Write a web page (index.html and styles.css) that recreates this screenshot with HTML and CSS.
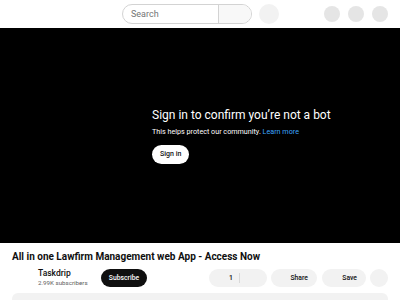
FILE: index.html
```html
<!DOCTYPE html>
<html lang="en">
<head>
  <meta charset="UTF-8">
  <meta name="viewport" content="width=device-width, initial-scale=1.0"/>
  <title>All in one Lawfirm Management web App - Access Now</title>
  <link rel="stylesheet" href="styles.css">
</head>
<body>
  <header class="topbar">
    <div class="search-group">
      <div class="search">
        <span class="search-input">Search</span>
        <span class="search-btn"></span>
      </div>
      <span class="mic"></span>
    </div>
    <div class="top-icons">
      <span class="dot"></span>
      <span class="dot"></span>
      <span class="dot"></span>
    </div>
  </header>

  <div class="player">
    <div class="bot-check">
      <h1>Sign in to confirm you’re not a bot</h1>
      <p>This helps protect our community. <a href="#">Learn more</a></p>
      <button class="signin">Sign in</button>
    </div>
  </div>

  <div class="info">
    <h2 class="title">All in one Lawfirm Management web App - Access Now</h2>
    <div class="owner-row">
      <div class="channel">
        <div class="channel-name">Taskdrip</div>
        <div class="subs">2.99K subscribers</div>
      </div>
      <button class="subscribe">Subscribe</button>
      <div class="actions">
        <div class="pill like">
          <span class="like-count">1</span>
          <span class="dislike"></span>
        </div>
        <div class="pill share">Share</div>
        <div class="pill save">Save</div>
        <div class="pill more"></div>
      </div>
    </div>
    <div class="description"></div>
  </div>
</body>
</html>
```

FILE: styles.css
```css
* {
  box-sizing: border-box;
  font-family: Roboto, "Liberation Sans", Arial, sans-serif;
}

body {
  margin: 0;
  background: #ffffff;
  color: #0f0f0f;
  overflow: hidden;
}

.topbar {
  height: 28px;
  display: flex;
  align-items: center;
  padding: 0 12px 0 122px;
}

.search-group {
  display: flex;
  align-items: center;
  gap: 7px;
}

.search {
  width: 130px;
  height: 20px;
  display: flex;
  border: 1px solid #d3d3d3;
  border-radius: 10px;
  overflow: hidden;
}

.search-input {
  flex: 1;
  font-size: 9px;
  color: #757575;
  line-height: 18px;
  padding-left: 8px;
}

.search-btn {
  width: 33px;
  background: #f8f8f8;
  border-left: 1px solid #d3d3d3;
}

.mic {
  width: 20px;
  height: 20px;
  border-radius: 50%;
  background: #f2f2f2;
}

.top-icons {
  margin-left: auto;
  display: flex;
  gap: 8px;
}

.dot {
  width: 16px;
  height: 16px;
  border-radius: 50%;
  background: #e5e5e5;
}

.player {
  height: 215px;
  background: #000000;
  display: flex;
  align-items: center;
  padding-left: 152px;
}

.bot-check h1 {
  margin: 0;
  color: #ffffff;
  font-size: 12px;
  font-weight: 400;
  line-height: 16px;
}

.bot-check p {
  margin: 4px 0 4px;
  color: #ffffff;
  font-size: 7.2px;
  line-height: 10px;
}

.bot-check a {
  color: #3ea6ff;
  text-decoration: none;
}

.signin {
  height: 19px;
  padding: 0 8px;
  border: none;
  border-radius: 10px;
  background: #ffffff;
  color: #0f0f0f;
  font-size: 7px;
  font-weight: 500;
}

.info {
  padding: 0 12px;
}

.title {
  margin: 7px 0 0;
  font-size: 10px;
  font-weight: 700;
  line-height: 14px;
}

.owner-row {
  margin-top: 5px;
  height: 18px;
  display: flex;
  align-items: center;
}

.channel {
  width: 63px;
  margin-left: 26px;
}

.channel-name {
  font-size: 8.5px;
  font-weight: 500;
  line-height: 11px;
}

.subs {
  font-size: 6.2px;
  color: #606060;
  line-height: 9px;
}

.subscribe {
  height: 18px;
  width: 46px;
  padding: 0;
  border: none;
  border-radius: 9px;
  background: #0f0f0f;
  color: #ffffff;
  font-size: 6.8px;
  font-weight: 500;
}

.actions {
  margin-left: auto;
  display: flex;
  gap: 4px;
}

.pill {
  height: 18px;
  border-radius: 9px;
  background: #f2f2f2;
  font-size: 6.8px;
  font-weight: 500;
  display: flex;
  align-items: center;
}

.like {
  width: 58px;
}

.like-count {
  width: 31px;
  text-align: center;
  padding-left: 14px;
  border-right: 1px solid #d9d9d9;
  line-height: 10px;
}

.share {
  width: 46px;
  justify-content: flex-end;
  padding-right: 9px;
}

.save {
  width: 44px;
  justify-content: flex-end;
  padding-right: 9px;
  margin-left: 1px;
}

.more {
  width: 18px;
}

.description {
  margin-top: 6px;
  height: 40px;
  border-radius: 6px;
  background: #f2f2f2;
}
```
